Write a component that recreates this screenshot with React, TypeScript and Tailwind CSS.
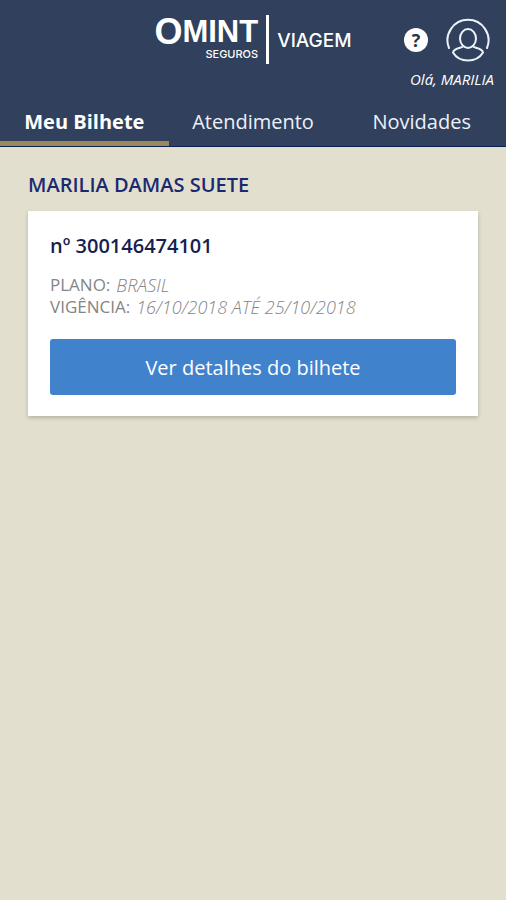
import type { ReactNode } from "react";

function Logo() {
  return (
    <div className="flex items-start text-white">
      <div className="flex flex-col items-end">
        <div className="flex items-center font-['Liberation_Sans',sans-serif] font-bold leading-[33px]">
          <span className="text-[36px]">O</span>
          <span className="text-[31px]">MINT</span>
        </div>
        <span className="font-[Inter,sans-serif] text-[11px] font-medium leading-3">SEGUROS</span>
      </div>
      <div className="ml-2 h-[49px] w-[3px] bg-white" />
      <span className="ml-2 mt-4 font-[Inter,sans-serif] text-[19px] font-medium leading-5">VIAGEM</span>
    </div>
  );
}

function ProfileIcon() {
  return (
    <svg viewBox="0 0 44 44" className="size-11" fill="none" stroke="#edf1f8" strokeWidth="2" strokeLinecap="round" aria-hidden="true">
      <path d="M3 30A20.5 20.5 0 1 1 41 30" />
      <ellipse cx="22" cy="20.5" rx="8" ry="9.5" />
      <path d="M17 28.500c-1 1.500-9 1.500-10 6 3 5 9 8 15 8s12-3 15-8c-1-4.500-9-4.500-10-6" />
    </svg>
  );
}

function Tab({ active = false, children }: { active?: boolean; children: ReactNode }) {
  return (
    <button
      type="button"
      role="tab"
      aria-selected={active}
      className={
        active
          ? "flex-1 border-b-[5px] border-[#9b8a59] pt-1 text-xl font-bold text-white"
          : "flex-1 border-b-[5px] border-transparent pt-1 text-xl text-[#edf1f8]"
      }
    >
      {children}
    </button>
  );
}

export default function App() {
  return (
    <div className="min-h-screen bg-[#e2dfce] font-['Open_Sans',sans-serif]">
      <header className="border-b border-[#08204f] bg-[#30405d]">
        <div className="grid h-[98px] grid-cols-[1fr_auto_1fr]">
          <div />
          <div className="pt-[15px]">
            <Logo />
          </div>
          <div className="flex flex-col items-end pr-3 pt-[18px]">
            <div className="flex items-center gap-[18px] pr-1">
              <button
                type="button"
                aria-label="Ajuda"
                className="flex size-6 items-center justify-center rounded-full bg-white text-lg font-bold leading-6 text-[#263450]"
              >
                ?
              </button>
              <button type="button" aria-label="Perfil">
                <ProfileIcon />
              </button>
            </div>
            <span className="mt-[7px] text-[15px] italic leading-5 text-white">Olá, MARILIA</span>
          </div>
        </div>
        <div role="tablist" className="flex h-12">
          <Tab active>Meu Bilhete</Tab>
          <Tab>Atendimento</Tab>
          <Tab>Novidades</Tab>
        </div>
      </header>

      <main className="px-7 pt-6">
        <h1 className="text-xl font-semibold leading-7 text-[#1b2a70]">MARILIA DAMAS SUETE</h1>
        <section className="mt-3 bg-white px-[22px] pb-[21px] pt-[21px] shadow-[0_2px_4px_rgba(0,0,0,0.2)]">
          <h2 className="text-xl font-semibold leading-7 text-[#171f51]">nº 300146474101</h2>
          <dl className="mt-3.5 text-lg leading-[22px] text-[#858585]">
            <div className="flex gap-1.5">
              <dt className="text-[17px] font-medium">PLANO:</dt>
              <dd className="font-light italic">BRASIL</dd>
            </div>
            <div className="flex gap-1.5">
              <dt className="text-[17px] font-medium">VIGÊNCIA:</dt>
              <dd className="font-light italic">16/10/2018 ATÉ 25/10/2018</dd>
            </div>
          </dl>
          <button type="button" className="mt-[21px] h-14 w-full rounded-[3px] bg-[#4182cd] pt-px text-xl text-white">
            Ver detalhes do bilhete
          </button>
        </section>
      </main>
    </div>
  );
}
